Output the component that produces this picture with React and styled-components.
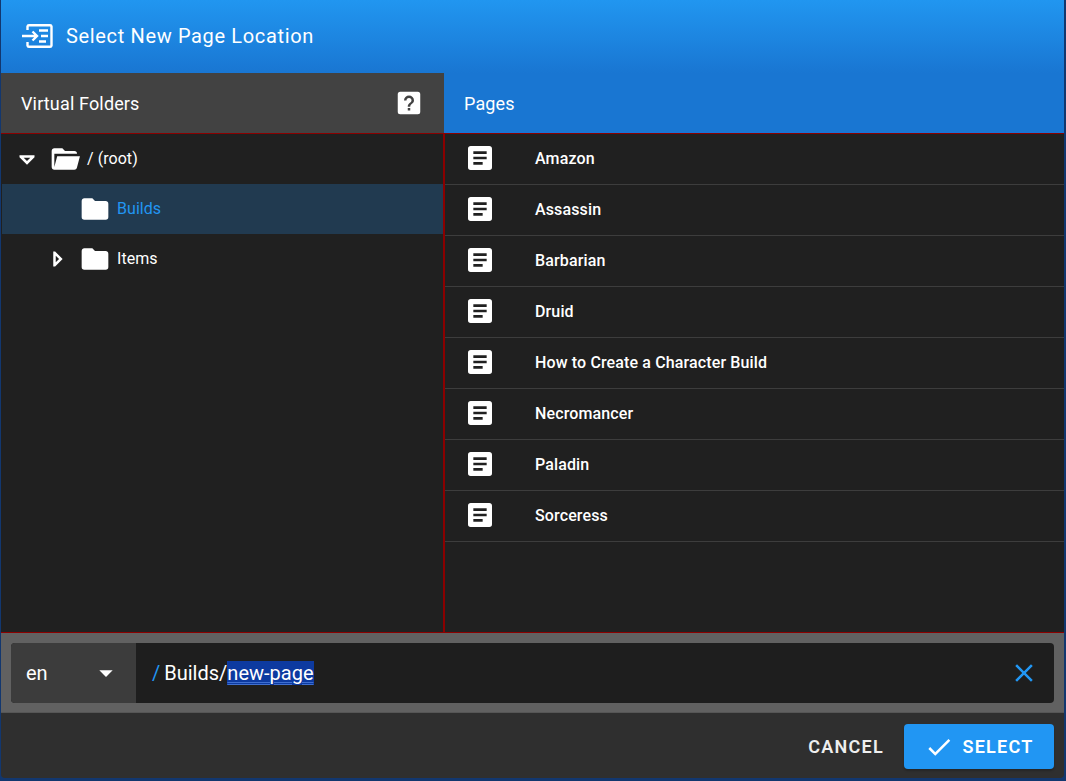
import styled, { createGlobalStyle } from "styled-components";

const GlobalStyle = createGlobalStyle`
  html, body {
    margin: 0;
    padding: 0;
    height: 100%;
    overflow: hidden;
    background: #12376f;
    font-family: Roboto, "Liberation Sans", sans-serif;
  }
`;

const Dialog = styled.div`
  width: 1063px;
  height: 778px;
  margin-left: 1px;
  display: flex;
  flex-direction: column;
  background: #2f2f2f;
  border-radius: 0 0 4px 4px;
  overflow: hidden;
`;
const TitleBar = styled.div`
  height: 73px;
  flex-shrink: 0;
  display: flex;
  align-items: center;
  padding: 0 0 2px 20px;
  gap: 13px;
  box-sizing: border-box;
  background: linear-gradient(to bottom, #2196f0, #1976d2 100%);
  color: #fff;
  font-size: 20px;
  font-weight: 400;
  letter-spacing: 0.65px;
`;
const Panels = styled.div`
  flex: 1;
  display: flex;
  min-height: 0;
`;
const LeftPanel = styled.div`
  width: 443px;
  flex-shrink: 0;
  display: flex;
  flex-direction: column;
`;
const RightPanel = styled.div`
  flex: 1;
  display: flex;
  flex-direction: column;
`;
const PanelHead = styled.div`
  height: 60px;
  flex-shrink: 0;
  display: flex;
  align-items: center;
  justify-content: space-between;
  box-sizing: border-box;
  padding: 0 20px 0 20px;
  background: ${(p) => (p.$blue ? "#1976d2" : "#424242")};
  color: #fff;
  font-size: 18px;
  letter-spacing: 0.15px;
`;
const PanelBody = styled.div`
  flex: 1;
  background: #202020;
  border-top: 1px solid #8b0000;
  border-bottom: 1px solid #8b0000;
  border-left: ${(p) => (p.$side === "right" ? "1px solid #8b0000" : "0")};
  border-right: ${(p) => (p.$side === "left" ? "1px solid #8b0000" : "0")};
  padding-left: ${(p) => (p.$side === "left" ? "1px" : "0")};
  box-sizing: border-box;
  min-height: 0;
`;
const TreeRow = styled.div`
  height: 50px;
  display: flex;
  align-items: center;
  padding-left: ${(p) => p.$indent}px;
  padding-bottom: 1px;
  box-sizing: border-box;
  background: ${(p) => (p.$active ? "#213a50" : "transparent")};
  color: ${(p) => (p.$active ? "#2196f3" : "#fff")};
  font-size: 16px;
  letter-spacing: 0.05px;
`;
const Caret = styled.svg`
  width: 30px;
  height: 30px;
  fill: #fff;
  flex-shrink: 0;
  margin-right: 7px;
`;
const Icon = styled.svg`
  width: ${(p) => p.$size || 32}px;
  height: ${(p) => p.$size || 32}px;
  fill: ${(p) => p.$color || "#fff"};
  flex-shrink: 0;
`;
const TreeLabel = styled.span`
  margin-left: 6px;
`;
const PageRow = styled.div`
  height: 51px;
  box-sizing: border-box;
  display: flex;
  align-items: center;
  padding: 0 0 2px 19px;
  border-bottom: 1px solid #3d3d3d;
  color: #fff;
  font-size: 16px;
  font-weight: 500;
  letter-spacing: 0.13px;
`;
const PageName = styled.span`
  margin-left: 39px;
`;
const PathBar = styled.div`
  height: 80px;
  flex-shrink: 0;
  box-sizing: border-box;
  padding: 10px;
  background: #616161;
  border-bottom: 1px solid #565656;
`;
const PathField = styled.div`
  height: 60px;
  display: flex;
  border-radius: 4px;
  overflow: hidden;
  background: #1e1e1e;
`;
const LocaleSelect = styled.div`
  width: 125px;
  display: flex;
  align-items: center;
  justify-content: space-between;
  box-sizing: border-box;
  padding: 0 14px 0 15px;
  background: #3c3c3c;
  color: #fff;
  font-size: 20px;
`;
const PathInput = styled.div`
  flex: 1;
  display: flex;
  align-items: center;
  padding: 0 18px 0 16px;
  color: #fff;
  font-size: 20px;
  white-space: pre;
`;
const Slash = styled.span`
  color: #2196f3;
  margin-right: 4px;
`;
const Selected = styled.span`
  background: #0d3aa0;
  text-decoration: underline double #3f6fd0 1px;
  text-underline-offset: 2px;
`;
const ClearIcon = styled.svg`
  width: 30px;
  height: 30px;
  fill: #2196f3;
  margin-left: auto;
  margin-right: -3px;
`;
const Footer = styled.div`
  height: 65px;
  flex-shrink: 0;
  display: flex;
  align-items: center;
  justify-content: flex-end;
  padding: 2px 10px 0 0;
  gap: 20px;
  box-sizing: border-box;
`;
const TextButton = styled.div`
  color: #eee;
  font-size: 18px;
  font-weight: 600;
  letter-spacing: 1.25px;
`;
const PrimaryButton = styled.div`
  width: 150px;
  height: 45px;
  box-sizing: border-box;
  display: flex;
  align-items: center;
  justify-content: center;
  gap: 8px;
  background: #2196f3;
  border-radius: 4px;
  color: #fff;
  font-size: 18px;
  font-weight: 600;
  letter-spacing: 1.25px;
  box-shadow: 0 2px 2px rgba(0, 0, 0, 0.2);
`;

const FOLDER = "M10,4H4C2.89,4 2,4.89 2,6V18A2,2 0 0,0 4,20H20A2,2 0 0,0 22,18V8C22,6.89 21.1,6 20,6H12L10,4Z";
const FOLDER_OPEN = "M19,20H4C2.89,20 2,19.1 2,18V6C2,4.89 2.89,4 4,4H10L12,6H19A2,2 0 0,1 21,8H21L4,8V18L6.14,10H23.21L20.93,18.5C20.7,19.37 19.92,20 19,20Z";
const TEXT_BOX = "M14,17H7V15H14M17,13H7V11H17M17,9H7V7H17M19,3H5C3.89,3 3,3.89 3,5V19A2,2 0 0,0 5,21H19A2,2 0 0,0 21,19V5C21,3.89 20.1,3 19,3Z";
const HELP_BOX = "M11,18H13V16H11V18M12,6A4,4 0 0,0 8,10H10A2,2 0 0,1 12,8A2,2 0 0,1 14,10C14,12 11,11.75 11,15H13C13,12.75 16,12.5 16,10A4,4 0 0,0 12,6M5,3H19A2,2 0 0,1 21,5V19A2,2 0 0,1 19,21H5A2,2 0 0,1 3,19V5A2,2 0 0,1 5,3Z";

const pages = ["Amazon", "Assassin", "Barbarian", "Druid", "How to Create a Character Build", "Necromancer", "Paladin", "Sorceress"];

function TitleIcon() {
  return (
    <svg width="32" height="26" viewBox="0 0 32 26" fill="none" stroke="#fff" strokeWidth="2.4">
      <path d="M6.5 7V3.5A1.5 1.5 0 0 1 8 2.2H29A1.5 1.5 0 0 1 30.5 3.5V22.5A1.5 1.5 0 0 1 29 23.8H8A1.5 1.5 0 0 1 6.5 22.5V19" />
      <path d="M1 13H15M11.5 8.5L16 13L11.5 17.5" />
      <path d="M18 7.5H27M20 13H27M18 18.5H25" />
    </svg>
  );
}

export default function App() {
  return (
    <>
      <GlobalStyle />
      <Dialog>
        <TitleBar>
          <TitleIcon />
          Select New Page Location
        </TitleBar>
        <Panels>
          <LeftPanel>
            <PanelHead>
              Virtual Folders
              <Icon $size={30} viewBox="0 0 24 24">
                <path fillRule="evenodd" d={HELP_BOX} />
              </Icon>
            </PanelHead>
            <PanelBody $side="left">
              <TreeRow $indent={10}>
                <Caret viewBox="0 0 24 24"><path fillRule="evenodd" d="M18,9V10.5L12,16.5L6,10.5V9H18M12,13.67L14.67,11H9.33L12,13.67Z" /></Caret>
                <Icon viewBox="0 0 24 24"><path d={FOLDER_OPEN} /></Icon>
                <TreeLabel>/ (root)</TreeLabel>
              </TreeRow>
              <TreeRow $indent={77} $active>
                <Icon viewBox="0 0 24 24"><path d={FOLDER} /></Icon>
                <TreeLabel>Builds</TreeLabel>
              </TreeRow>
              <TreeRow $indent={40}>
                <Caret viewBox="0 0 24 24"><path fillRule="evenodd" d="M9,18V6H10.5L16.5,12L10.5,18H9M11,9.33V14.67L13.67,12L11,9.33Z" /></Caret>
                <Icon viewBox="0 0 24 24"><path d={FOLDER} /></Icon>
                <TreeLabel>Items</TreeLabel>
              </TreeRow>
            </PanelBody>
          </LeftPanel>
          <RightPanel>
            <PanelHead $blue>Pages</PanelHead>
            <PanelBody $side="right">
              {pages.map((name) => (
                <PageRow key={name}>
                  <Icon viewBox="0 0 24 24"><path d={TEXT_BOX} /></Icon>
                  <PageName>{name}</PageName>
                </PageRow>
              ))}
            </PanelBody>
          </RightPanel>
        </Panels>
        <PathBar>
          <PathField>
            <LocaleSelect>
              en
              <Icon $size={32} viewBox="0 0 24 24"><path d="M7,10L12,15L17,10H7Z" /></Icon>
            </LocaleSelect>
            <PathInput>
              <Slash>/</Slash>Builds/<Selected>new-page</Selected>
              <ClearIcon viewBox="0 0 24 24"><path d="M19,6.41L17.59,5L12,10.59L6.41,5L5,6.41L10.59,12L5,17.59L6.41,19L12,13.41L17.59,19L19,17.59L13.41,12L19,6.41Z" /></ClearIcon>
            </PathInput>
          </PathField>
        </PathBar>
        <Footer>
          <TextButton>CANCEL</TextButton>
          <PrimaryButton>
            <Icon $size={30} viewBox="0 0 24 24"><path d="M21,7L9,19L3.5,13.5L4.91,12.09L9,16.17L19.59,5.59L21,7Z" /></Icon>
            SELECT
          </PrimaryButton>
        </Footer>
      </Dialog>
    </>
  );
}
